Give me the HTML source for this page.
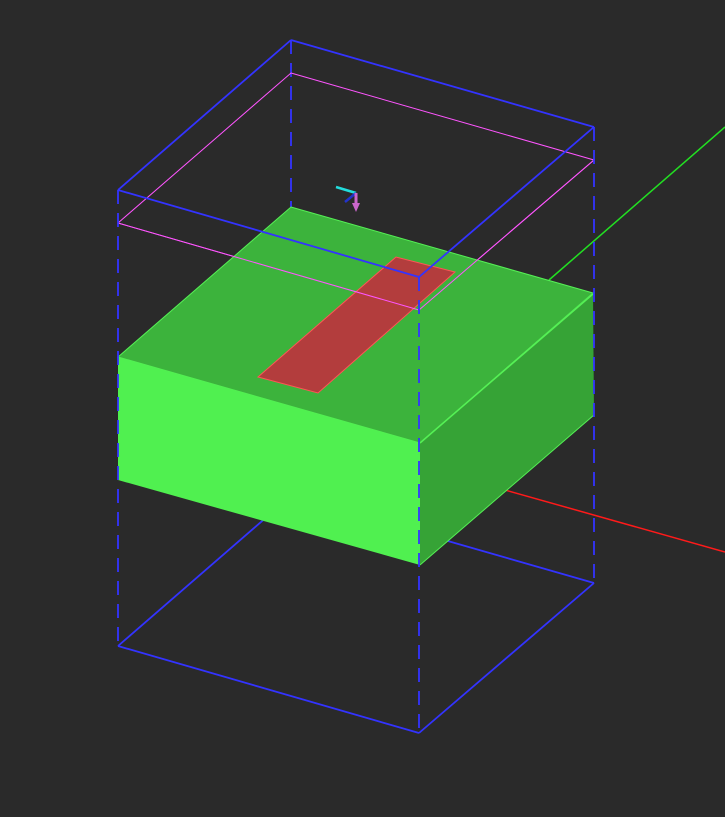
<!DOCTYPE html>
<html><head><style>html,body{margin:0;padding:0;background:#2a2a2a;width:725px;height:817px;overflow:hidden}</style></head>
<body>
<svg width="725" height="817" viewBox="0 0 725 817" xmlns="http://www.w3.org/2000/svg">
<rect width="725" height="817" fill="#2a2a2a"/>
<line x1="549" y1="280" x2="725" y2="127" stroke="#22e022" stroke-width="1.5"/>
<line x1="505" y1="490" x2="725" y2="552" stroke="#ff1a1a" stroke-width="1.5"/>
<g stroke="#3333ff" stroke-width="1.8" fill="none">
<line x1="118" y1="646" x2="291" y2="496"/>
<line x1="291" y1="496" x2="594" y2="583"/>
<line x1="291" y1="40" x2="594" y2="127"/>
<line x1="291" y1="40" x2="118" y2="190"/>
<line x1="291" y1="40" x2="291" y2="207" stroke-dasharray="14,9"/>
</g>
<g stroke="#ff55ff" stroke-width="1" fill="none">
<polygon points="291,73 594,160 419,310 118,223"/>
</g>
<polygon points="291,207 593,293 420,443 118,357" fill="#3cb33c" stroke="#55f055" stroke-width="1"/>
<polygon points="593,293 594,415 420,565 420,443" fill="#36a336"/>
<line x1="420" y1="443" x2="593" y2="294" stroke="#55f055" stroke-width="1.5"/>
<line x1="420" y1="565" x2="594" y2="415" stroke="#55f055" stroke-width="1"/>
<polygon points="118,357 420,443 420,565 118,480" fill="#50f050"/>
<polygon points="258,377 396,257 455,272 318,393" fill="#b33d3d" stroke="#ff5555" stroke-width="1"/>
<g stroke="#ff55ff" stroke-width="1" fill="none">
<line x1="118" y1="223" x2="419" y2="310"/>
<line x1="594" y1="160" x2="419" y2="310"/>
</g>
<g stroke="#3333ff" stroke-width="1.8" fill="none">
<line x1="118" y1="190" x2="419" y2="277"/>
<line x1="594" y1="127" x2="419" y2="277"/>
<line x1="118" y1="646" x2="419" y2="733"/>
<line x1="419" y1="733" x2="594" y2="583"/>
<g stroke-dasharray="14,9">
<line x1="118" y1="190" x2="118" y2="646"/>
<line x1="419" y1="277" x2="419" y2="733"/>
<line x1="594" y1="127" x2="594" y2="583"/>
</g>
</g>
<line x1="336" y1="187" x2="356" y2="193" stroke="#22dddd" stroke-width="2.5"/>
<line x1="356" y1="193" x2="345" y2="202" stroke="#2233cc" stroke-width="2.5"/>
<line x1="356" y1="193" x2="356" y2="206" stroke="#cc66cc" stroke-width="3"/>
<polygon points="352,203 360,203 356,212" fill="#cc66cc"/>
</svg>
</body></html>
